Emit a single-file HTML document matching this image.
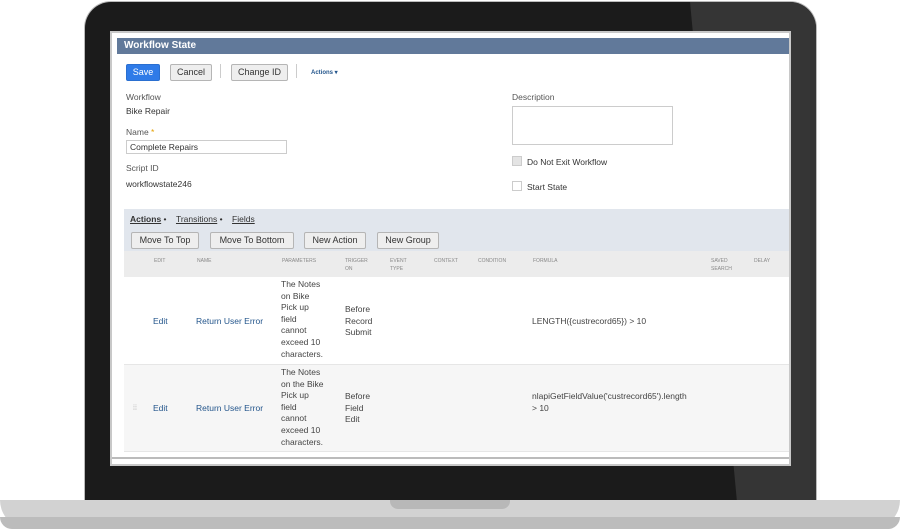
<!DOCTYPE html>
<html><head><style>
*{margin:0;padding:0;box-sizing:border-box}
body{width:900px;height:529px;background:#fff;position:relative;overflow:hidden;font-family:"Liberation Sans",sans-serif;color:#333}
.a{position:absolute}
.bez{left:85px;top:2px;width:731px;height:500px;border-radius:26px 26px 0 0;overflow:hidden;box-shadow:0 0 0 1px #bbb;background:#1b1b1b}
.scr{left:110px;top:31px;width:681px;height:435px;background:#fff;border:2px solid #c8c8c8;overflow:hidden}
.base{left:0;top:500px;width:900px;height:29px;background:#d2d2d2;border-radius:0 0 40px 40px}
.base2{left:0;top:517px;width:900px;height:12px;background:#bcbcbc;border-radius:0 0 40px 40px}
.btn{position:absolute;height:17px;border:1px solid #b5b5b5;background:#eee;font-size:9px;line-height:15px;text-align:center;color:#333;border-radius:2px}
.lbl{position:absolute;font-size:8.5px;color:#555}
.val{position:absolute;font-size:8.5px;color:#333}
.th{position:absolute;font-size:5px;color:#888;line-height:8px}
.td{position:absolute;font-size:8.5px;line-height:11.6px;color:#444}
.lnk{color:#24568c}
</style></head><body>
<div class="a bez"><svg width="731" height="500" style="position:absolute;left:0;top:0"><polygon points="605,0 731,0 731,500 652,500" fill="#353535"/></svg></div>
<div class="a base"></div>
<div class="a base2"></div>
<div class="a" style="left:390px;top:500px;width:120px;height:9px;background:#b8b8b8;border-radius:0 0 8px 8px"></div>
<div class="a scr">
 <div class="a" style="left:5px;top:5px;width:680px;height:16px;background:#61799a;color:#fff;font-weight:bold;font-size:10px;line-height:16px;padding-left:7px">Workflow State</div>
 <div class="btn" style="left:14px;top:31px;width:34px;background:#2f7be8;border-color:#2a6fd0;color:#fff">Save</div>
 <div class="btn" style="left:58px;top:31px;width:42px">Cancel</div>
 <div class="a" style="left:108px;top:31px;width:1px;height:14px;background:#ccc"></div>
 <div class="btn" style="left:119px;top:31px;width:57px">Change ID</div>
 <div class="a" style="left:184px;top:31px;width:1px;height:14px;background:#ccc"></div>
 <div class="a" style="left:199px;top:36px;font-size:6px;color:#24568c;font-weight:bold">Actions ▾</div>
 <div class="lbl" style="left:14px;top:59px">Workflow</div>
 <div class="val" style="left:14px;top:73px">Bike Repair</div>
 <div class="lbl" style="left:14px;top:94px">Name <span style="color:#e5a000">*</span></div>
 <div class="a" style="left:14px;top:107px;width:161px;height:14px;border:1px solid #ccc;font-size:8.5px;line-height:12px;padding-left:3px">Complete Repairs</div>
 <div class="lbl" style="left:14px;top:130px">Script ID</div>
 <div class="val" style="left:14px;top:146px">workflowstate246</div>
 <div class="lbl" style="left:400px;top:59px">Description</div>
 <div class="a" style="left:400px;top:73px;width:161px;height:39px;border:1px solid #ccc"></div>
 <div class="a" style="left:400px;top:123px;width:10px;height:10px;background:#e4e4e4;border:1px solid #ccc"></div>
 <div class="val" style="left:415px;top:124px">Do Not Exit Workflow</div>
 <div class="a" style="left:400px;top:148px;width:10px;height:10px;border:1px solid #ccc"></div>
 <div class="val" style="left:415px;top:149px">Start State</div>
 <div class="a" style="left:12px;top:176px;width:680px;height:50px;background:#e1e6ed"></div>
 <div class="a" style="left:18px;top:181px;font-size:8.5px;color:#333"><u style="font-weight:bold">Actions</u> • &nbsp;&nbsp;&nbsp;<u>Transitions</u> • &nbsp;&nbsp;&nbsp;<u>Fields</u></div>
 <div class="btn" style="left:19px;top:199px;width:68px">Move To Top</div>
 <div class="btn" style="left:98px;top:199px;width:84px">Move To Bottom</div>
 <div class="btn" style="left:192px;top:199px;width:62px">New Action</div>
 <div class="btn" style="left:265px;top:199px;width:62px">New Group</div>
 <div class="a" style="left:12px;top:218px;width:680px;height:26px;background:#ececec"></div>
 <div class="th" style="left:42px;top:224px">EDIT</div>
 <div class="th" style="left:85px;top:224px">NAME</div>
 <div class="th" style="left:170px;top:224px">PARAMETERS</div>
 <div class="th" style="left:233px;top:224px">TRIGGER<br>ON</div>
 <div class="th" style="left:278px;top:224px">EVENT<br>TYPE</div>
 <div class="th" style="left:322px;top:224px">CONTEXT</div>
 <div class="th" style="left:366px;top:224px">CONDITION</div>
 <div class="th" style="left:421px;top:224px">FORMULA</div>
 <div class="th" style="left:599px;top:224px">SAVED<br>SEARCH</div>
 <div class="th" style="left:642px;top:224px">DELAY</div>
 <div class="a" style="left:12px;top:331px;width:680px;height:88px;background:#f6f6f6;border-top:1px solid #e6e6e6;border-bottom:1px solid #e6e6e6"></div>
 <div class="td lnk" style="left:41px;top:283px">Edit</div>
 <div class="td lnk" style="left:84px;top:283px">Return User Error</div>
 <div class="td" style="left:169px;top:246px">The Notes<br>on Bike<br>Pick up<br>field<br>cannot<br>exceed 10<br>characters.</div>
 <div class="td" style="left:233px;top:271px">Before<br>Record<br>Submit</div>
 <div class="td" style="left:420px;top:283px">LENGTH({custrecord65}) &gt; 10</div>
 <div class="td" style="left:21px;top:370px;color:#aaa;font-size:7px">⁞⁞</div>
 <div class="td lnk" style="left:41px;top:370px">Edit</div>
 <div class="td lnk" style="left:84px;top:370px">Return User Error</div>
 <div class="td" style="left:169px;top:334px">The Notes<br>on the Bike<br>Pick up<br>field<br>cannot<br>exceed 10<br>characters.</div>
 <div class="td" style="left:233px;top:358px">Before<br>Field<br>Edit</div>
 <div class="td" style="left:420px;top:358px">nlapiGetFieldValue('custrecord65').length<br>&gt; 10</div>
 <div class="a" style="left:0;top:424px;width:681px;height:2px;background:#bbb"></div>
</div>
</body></html>
